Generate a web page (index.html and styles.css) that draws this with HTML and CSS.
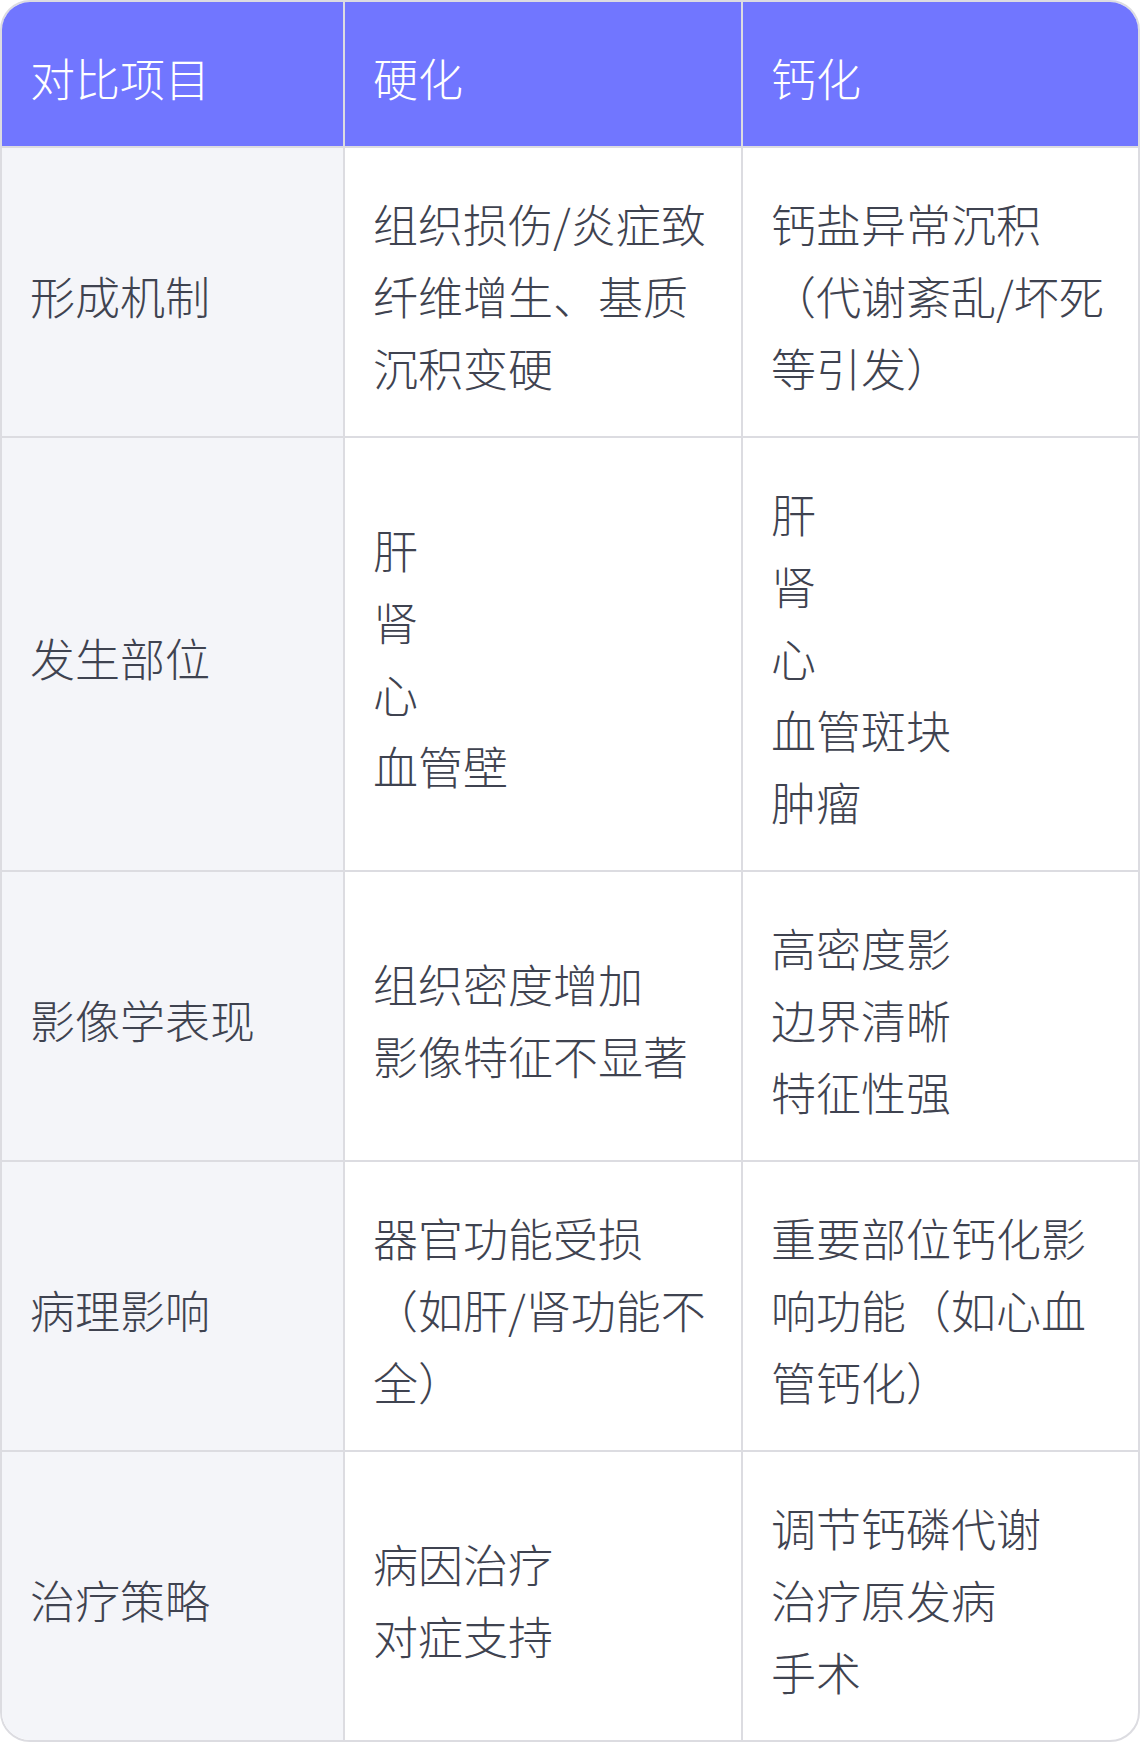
FILE: index.html
```html
<!DOCTYPE html>
<html>
<head>
<meta charset="utf-8">
<link rel="stylesheet" href="styles.css">
</head>
<body>
<div class="wrap">
<table class="cmp">
<colgroup><col class="c1"><col class="c2"><col class="c3"></colgroup>
<thead>
<tr><th>对比项目</th><th>硬化</th><th>钙化</th></tr>
</thead>
<tbody>
<tr><td>形成机制</td><td>组织损伤/炎症致纤维增生、基质沉积变硬</td><td>钙盐异常沉积（代谢紊乱/坏死等引发）</td></tr>
<tr><td>发生部位</td><td>肝<br>肾<br>心<br>血管壁</td><td>肝<br>肾<br>心<br>血管斑块<br>肿瘤</td></tr>
<tr><td>影像学表现</td><td>组织密度增加<br>影像特征不显著</td><td>高密度影<br>边界清晰<br>特征性强</td></tr>
<tr><td>病理影响</td><td>器官功能受损（如肝/肾功能不全）</td><td>重要部位钙化影响功能（如心血管钙化）</td></tr>
<tr><td>治疗策略</td><td>病因治疗<br>对症支持</td><td>调节钙磷代谢<br>治疗原发病<br>手术</td></tr>
</tbody>
</table>
</div>
</body>
</html>
```

FILE: styles.css
```css
html, body {
  margin: 0;
  padding: 0;
  background: #ffffff;
}
.wrap {
  width: 1140px;
  box-sizing: border-box;
  border: 2px solid #dcdce1;
  border-radius: 30px;
  overflow: hidden;
}
.cmp {
  width: 100%;
  border-collapse: separate;
  border-spacing: 0;
  table-layout: fixed;
  font-family: "Noto Sans CJK SC", sans-serif;
  font-weight: 300;
  font-size: 45px;
  line-height: 72px;
  color: #3f4350;
}
.c1 { width: 343px; }
.c2 { width: 398px; }
.cmp th,
.cmp td {
  padding: 40px 28px 32px;
  text-align: left;
  vertical-align: middle;
  font-weight: 300;
  border-right: 2px solid #dcdce1;
  border-bottom: 2px solid #dcdce1;
}
.cmp th:last-child,
.cmp td:last-child {
  border-right: 0;
}
.cmp tbody tr:last-child td {
  border-bottom: 0;
}
.cmp th {
  background: #7176ff;
  color: #ffffff;
}
.cmp td:first-child {
  background: #f4f5f9;
}
```
